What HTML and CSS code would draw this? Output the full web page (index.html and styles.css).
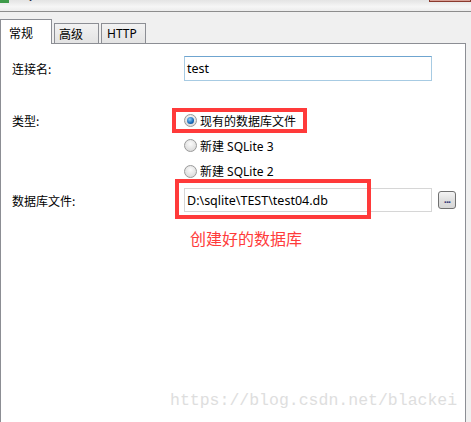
FILE: index.html
```html
<!DOCTYPE html>
<html lang="zh">
<head>
<meta charset="utf-8">
<title>SQLite - 新建连接</title>
<link rel="stylesheet" href="styles.css">
</head>
<body>
<div class="titlebar">
  <span class="app-icon"></span>
  <span class="title-text">SQLite - 新建连接</span>
  <span class="close-btn"></span>
</div>
<div class="tabs">
  <div class="tab active">常规</div>
  <div class="tab">高级</div>
  <div class="tab">HTTP</div>
</div>
<div class="pane">
  <div class="row row-name">
    <div class="lbl">连接名:</div>
    <div class="input input-focus">test</div>
  </div>
  <div class="row-type">
    <div class="lbl type-lbl">类型:</div>
    <div class="radios">
      <div class="radio-row annotated">
        <span class="radio checked"></span><span class="radio-text">现有的数据库文件</span>
        <span class="red-box red-box-1"></span>
      </div>
      <div class="radio-row">
        <span class="radio"></span><span class="radio-text">新建 SQLite 3</span>
      </div>
      <div class="radio-row">
        <span class="radio"></span><span class="radio-text">新建 SQLite 2</span>
      </div>
    </div>
  </div>
  <div class="row row-file">
    <div class="lbl">数据库文件:</div>
    <div class="file-ctrl">
      <div class="input input-file">D:\sqlite\TEST\test04.db</div>
      <div class="browse">...</div>
      <span class="red-box red-box-2"></span>
    </div>
  </div>
  <div class="note">创建好的数据库</div>
  <div class="watermark">https://blog.csdn.net/blackei</div>
</div>
</body>
</html>
```

FILE: styles.css
```css
* { box-sizing: border-box; }
html, body { margin: 0; padding: 0; }
body {
  width: 471px;
  height: 422px;
  overflow: hidden;
  background: #f0f0f0;
  font-family: "Noto Sans", "Noto Sans CJK SC", sans-serif;
  font-size: 12px;
  color: #000;
}

.titlebar {
  height: 12px;
  display: flex;
  align-items: flex-start;
  overflow: hidden;
  background: linear-gradient(to bottom, #e4e4e4, #f6f6f6 60%, #ececec);
  border-bottom: 1px solid #8d8d8d;
}
.app-icon {
  width: 9px;
  height: 3px;
  background: #3f9b4a;
  flex: none;
}
.title-text {
  margin-left: 8px;
  margin-top: -13px;
  font-size: 12px;
  line-height: 16px;
  color: #1a1a3a;
  white-space: nowrap;
}
.close-btn {
  margin-left: auto;
  width: 42px;
  height: 2px;
  background: #d8a096;
  border: 1px solid #8a3a2e;
  border-top: none;
}

.tabs {
  height: 31px;
  display: flex;
  align-items: flex-end;
  gap: 2px;
  position: relative;
  z-index: 1;
}
.tab {
  height: 20px;
  padding: 0 6px;
  border: 1px solid #8c8e94;
  border-bottom: none;
  background: linear-gradient(to bottom, #f2f2f2, #e3e3e3);
  font-family: "Noto Sans CJK SC", sans-serif;
  font-size: 12px;
  line-height: 19px;
  display: flex;
  align-items: center;
}
.tab:nth-child(2) { width: 45px; padding-left: 4px; }
.tab:nth-child(3) { width: 45px; padding-left: 5px; font-family: "Noto Sans", sans-serif; }
.tab.active {
  width: 52px;
  padding-left: 8px;
  background: #fff;
  margin-bottom: -1px;
  height: 25px;
  align-items: flex-start;
  padding-top: 3px;
}

.pane {
  position: relative;
  width: 466px;
  height: 379px;
  overflow: hidden;
  background: #fff;
  border: 1px solid #8c8e94;
  border-bottom: none;
  padding-left: 11px;
  padding-top: 12px;
}

.lbl {
  width: 172px;
  flex: none;
  font-family: "Noto Sans CJK SC", sans-serif;
  font-size: 12px;
}

.row {
  display: flex;
  align-items: center;
}
.row-name { height: 25px; }

.input {
  width: 248px;
  height: 25px;
  border: 1px solid #c9d3dc;
  padding-left: 2px;
  display: flex;
  align-items: center;
  font-family: "Noto Sans", sans-serif;
  font-size: 12.5px;
  background: #fff;
}
.input-focus {
  border-color: #a7cbe3;
  border-top-color: #6fa5d0;
}

.row-type {
  display: flex;
  margin-top: 27px;
}
.type-lbl {
  height: 25px;
  display: flex;
  align-items: center;
}
.radios {
  display: flex;
  flex-direction: column;
}
.radio-row {
  position: relative;
  height: 25px;
  display: flex;
  align-items: center;
  gap: 3px;
}
.radio-row:nth-child(3) { height: 26px; }
.radio-text {
  font-family: "Noto Sans", "Noto Sans CJK SC", sans-serif;
  font-size: 12px;
}
.radio {
  width: 13px;
  height: 13px;
  border-radius: 50%;
  border: 1px solid #9a9a9a;
  background: radial-gradient(circle at 50% 35%, #fbfbfb, #dcdcdc 75%);
  flex: none;
  position: relative;
}
.radio.checked::after {
  content: "";
  position: absolute;
  left: 2px;
  top: 2px;
  width: 7px;
  height: 7px;
  border-radius: 50%;
  background: radial-gradient(circle at 40% 35%, #8fd2ff, #1668b8 60%, #0b3f7a);
}

.red-box {
  position: absolute;
  border: 4px solid #ff3a3a;
  pointer-events: none;
}
.red-box-1 {
  left: -12px;
  top: 0;
  width: 135px;
  height: 25px;
}

.row-file {
  margin-top: 4px;
  height: 24px;
}
.file-ctrl {
  position: relative;
  display: flex;
  align-items: center;
  gap: 6px;
}
.input-file {
  height: 24px;
  border-color: #d6d6d6;
}
.browse {
  width: 18px;
  height: 18px;
  border: 1px solid #707070;
  border-radius: 3px;
  background: linear-gradient(to bottom, #f4f4f4, #e0e0e0 50%, #d6d6d6);
  font-size: 11px;
  font-weight: bold;
  line-height: 14px;
  text-align: center;
  color: #3a3a7a;
  letter-spacing: -1px;
}
.red-box-2 {
  left: -9px;
  top: -9px;
  width: 196px;
  height: 40px;
}

.note {
  margin-top: 16px;
  margin-left: 178px;
  font-family: "Noto Sans CJK SC", sans-serif;
  font-size: 16px;
  line-height: 20px;
  color: #ff3b3b;
}

.watermark {
  position: absolute;
  left: 169px;
  top: 347px;
  font-family: "Liberation Mono", monospace;
  font-size: 16.5px;
  line-height: 20px;
  color: #dedede;
  white-space: nowrap;
}
```
